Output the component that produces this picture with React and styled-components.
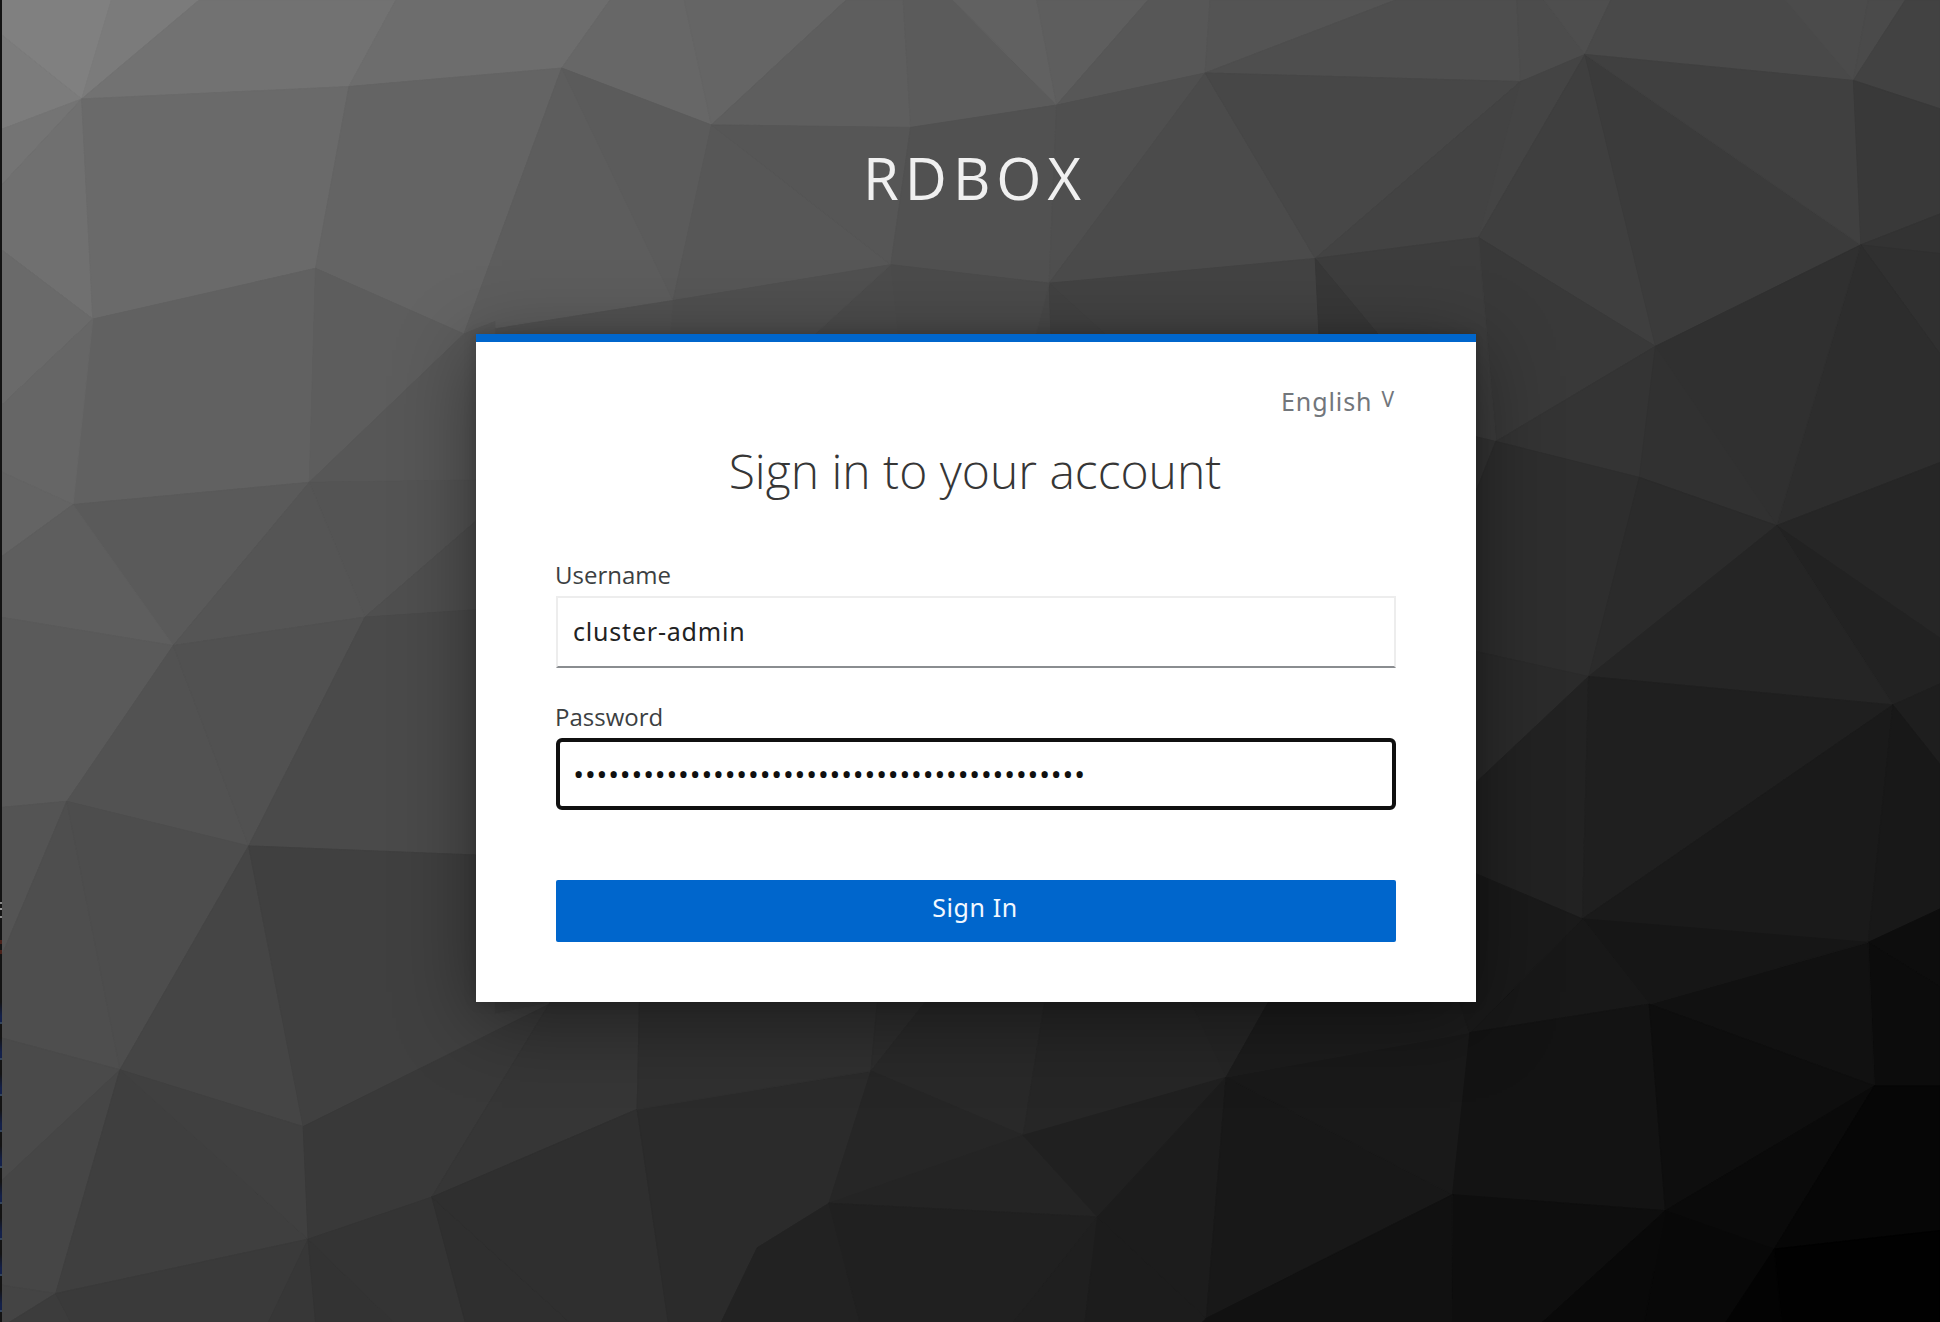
import React from "react";
import styled, { createGlobalStyle } from "styled-components";

const Reset = createGlobalStyle`
  *, *::before, *::after { box-sizing: border-box; }
  html, body { margin: 0; padding: 0; background: #1b1b1b; }
  body { font-family: "Open Sans", "Noto Sans", sans-serif; overflow: hidden; }
`;

/* Low-poly backdrop: named mesh vertices in a 1568 x 1069 space. */
const V = {
  A: [66, 80], B: [282, 70], C: [454, 55], D: [575, 101], E: [736, 103],
  F: [255, 217], G: [375, 270], H: [75, 258], I: [720, 214], J: [544, 243],
  K: [59, 408], L: [250, 390], M: [140, 522], N: [295, 499],
  Q: [854, 85], R: [974, 59], S: [1229, 66], T: [1281, 44], U: [1498, 65],
  W: [1063, 209], O: [848, 229], X: [1195, 192], Y: [1504, 198], Z: [1338, 280],
  AA: [1209, 357], AB: [1325, 386], AC: [1436, 425], AD: [1530, 570],
  AE: [1284, 547], AF: [1279, 743], AG: [1510, 762], AH: [1333, 812],
  AI: [1188, 835], AJ: [991, 871], AK: [1515, 878], AL: [827, 918],
  AM: [887, 984], AN: [1174, 966], AO: [1346, 979], AP: [1434, 1010],
  AQ: [975, 1066], AR: [670, 973], AS: [54, 648], AT: [201, 684],
  AU: [97, 865], AV: [245, 911], AW: [515, 897], AX: [704, 866],
  AY: [349, 968], AZ: [249, 1002], BA: [45, 1046], BB: [612, 1009],
};

/* Each facet: a gray level followed by its corners. */
const FACETS = `
80 0,0 90,0 A 0,27
7b 90,0 161,0 A
7c 0,27 A 0,105
72 161,0 320,0 B A
6d 320,0 493,0 C B
67 493,0 553,0 D C
65 553,0 684,0 D
5e 684,0 730,0 E D
5b 730,0 770,0 Q E
61 770,0 838,0 Q
5e 838,0 928,0 Q
57 928,0 978,0 R Q
54 978,0 1128,0 R
4e 1128,0 1226,0 S R
4c 1226,0 1248,0 T S
4e 1248,0 1302,0 T
49 1302,0 1443,0 U T
4b 1443,0 1510,0 U
4a 1510,0 1540,0 U
42 1540,0 1568,0 1568,88 U
74 0,105 A 0,151
70 0,151 A H 0,201
6a 0,201 H 0,329
6a A B F H
64 B C G F
5d C J G
5b C D J
57 D I J
56 D E I
51 E Q O I
4f Q R O
4b R W O
47 R S W
43 S X W
44 S T X
3f T Z X
3b T Y Z
40 T U Y
39 U 1568,88 1568,173 Y
33 Y 1568,173 1568,205
30 Y 1568,205 1568,286
2d Y 1568,286 1568,374 AC
30 Y Z AC
39 X Z AA
3d W X AA 1180,350
34 Z AB AA
31 Z AC AB
43 O W 1067,290 910,290
38 W 1067,290 1180,350
48 O 832,290 850,290
42 O 850,290 915,290
4b I O 832,290 728,290
4c I 728,290 637,290
50 J I 637,290 540,290
52 G J 540,290 400,290
61 H F L K
5d F G L
66 0,329 H K 0,381
64 0,381 K 0,451
5a K L M
5e 0,451 K M 0,499
57 G L 400,388 400,260
54 L 400,388 400,408 N
55 L N M
4f N 400,408 400,492
5a 0,499 M AS 0,653
52 M AS AT
51 M N AT
4a N 400,492 400,692 AT
54 0,653 AS 0,776
4e AS AU 0,839 0,776
4d AS AT AU
45 AT AV AU
40 AT 400,692 400,820 458,808 AV
4a AU 0,839 0,956
46 AU 0,956 0,1039 BA
3f AU BA AZ
40 AU AV AZ
39 AV 458,805 445,810 AY AZ
36 AY 445,810 517,800 AW
44 BA 0,1039 0,1069 8,1069
3c BA 8,1069 57,1069
3a BA AZ 217,1069 57,1069
37 AZ 217,1069 255,1069
33 AZ 255,1069 318,1069
34 AZ AY 376,1069 318,1069
2f AY 376,1069 460,1069
2f AY AW 540,1069 460,1069
2b AW AX AR BB 583,1069 540,1069
30 AW 517,800 710,800 AX
2d AX 710,800 756,800
29 AX 756,800 846,800 AL
26 AX AL AR
26 AL 846,800 958,800 AJ
24 AL AR AM
20 AL AJ AM
22 AR BB 583,1069 695,1069
20 AR AM 819,1069 695,1069
1f AM 819,1069 877,1069
1c AM 877,1069 972,1069 AQ
1c AM AJ AQ
18 AJ AN AQ
19 AJ AI AN
25 AJ 958,800 1031,800
1c AJ 1031,800 1176,800 AI
34 AA 1180,350 1180,430
2e AA AB AE 1180,524 1180,430
2b AB AC AE
26 AC 1568,374 1568,516
22 AC 1568,516 1568,553 AD
25 AC AD AE
2b AE 1180,524 1180,645
22 AE 1180,645 1180,701 AF
1f AE AD AF
1a AD AG AF
1e AD 1568,553 1568,618
18 AD 1568,618 1568,735 AG
0d AG 1568,735 1568,798
0c AG 1568,798 1568,878 AK
11 AG AK AH
16 AF AG AH
18 AF AH AI
1a AF AI 1176,800 1180,701
13 AH AI AN AO
0e AH AK AO
0a AK AO AP
06 AK 1568,878 1568,995 AP
0e AN AO 1247,1069 1173,1069
11 AN 1173,1069 972,1069 AQ
08 AO AP 1395,1069 1329,1069
09 AO 1247,1069 1329,1069
01 AP 1568,995 1568,1069 1440,1069
03 AP 1395,1069 1440,1069
`.trim().split("\n").map((line) => {
  const [level, ...corners] = line.split(" ");
  const points = corners.map((c) => (V[c] ? V[c].join(",") : c)).join(" ");
  return { fill: `#${level}${level}${level}`, points };
});

const Page = styled.div`
  display: grid;
  grid-template: 1322px / 1940px;
  overflow: hidden;
`;

const Mesh = styled.svg`
  grid-area: 1 / 1;
  width: 1940px;
  height: 1322px;
  background: #3c3c3c;
`;

const Screen = styled.div`
  grid-area: 1 / 1;
  z-index: 1;
  display: grid;
  grid-template-columns: 2px 1fr;
`;

const WindowEdge = styled.div`
  display: grid;
  grid-template-rows: 902px 1fr;
  background: #131313;
`;

const EdgeMarks = styled.div`
  grid-row: 2;
  background:
    linear-gradient(#888 0 2px, transparent 2px 6px, #999 6px 8px, transparent 8px 14px, #888 14px 16px,
      transparent 16px 38px, #4a211a 38px 42px, transparent 42px 48px, #4a211a 48px 52px, transparent 52px) no-repeat,
    repeating-linear-gradient(transparent 0 12px, #13204a 26px 32px, #34455c 32px 34px, #131313 34px 36px) 0 88px / 2px 332px no-repeat;
`;

const Main = styled.main`
  display: flex;
  flex-direction: column;
  align-items: center;
`;

const Brand = styled.header`
  height: 334px;
  padding: 138px 0 0 8px;
  font-size: 58px;
  line-height: 79px;
  letter-spacing: 6px;
  color: #f0f0f0;
  text-transform: uppercase;
`;

const Card = styled.section`
  display: flex;
  flex-direction: column;
  width: 1000px;
  height: 668px;
  margin-left: 10px;
  padding: 0 80px;
  border-top: 8px solid #0066cc;
  background: #fff;
  box-shadow: 0 16px 74px rgba(3, 3, 3, 0.42), 0 0 12px rgba(3, 3, 3, 0.16);
`;

const LocaleRow = styled.div`
  display: flex;
  justify-content: flex-end;
  align-items: baseline;
  gap: 9px;
  height: 100px;
  padding: 42px 2px 0 0;
  font-family: "Noto Sans", sans-serif;
  font-size: 25px;
  line-height: 34px;
  color: #72767b;
`;

const LocaleName = styled.span`
  letter-spacing: 0.9px;
`;

const LocaleCaret = styled.span`
  font-size: 21px;
  transform: translateY(-4px);
`;

const Title = styled.h1`
  margin: 0 2px 0 0;
  height: 116px;
  font-size: 48px;
  font-weight: 300;
  line-height: 58px;
  text-align: center;
  color: #363636;
`;

const Form = styled.form`
  display: flex;
  flex-direction: column;
`;

const Field = styled.div`
  display: flex;
  flex-direction: column;
  height: 142px;
`;

const Label = styled.label`
  height: 38px;
  margin-left: -1px;
  font-size: 24px;
  line-height: 34px;
  color: #3c3f42;
`;

const TextInput = styled.input`
  width: 840px;
  height: 72px;
  padding: 0 15px 3px;
  border: 2px solid #ededed;
  border-bottom-color: #8a8d90;
  border-radius: 0;
  outline: none;
  background: #fff;
  font-family: "Noto Sans", sans-serif;
  font-size: 25px;
  letter-spacing: 0.8px;
  color: #222;
`;

const PasswordInput = styled(TextInput)`
  padding: 0 13px 2px;
  border: 4px solid #101010;
  border-radius: 6px;
  font-family: "Open Sans", sans-serif;
  font-size: 30px;
  letter-spacing: 0.37px;
  color: #101010;
`;

const SubmitButton = styled.button`
  width: 840px;
  height: 62px;
  margin-top: 38px;
  padding: 0 2px 8px 0;
  border: 0;
  border-radius: 2px;
  background: #0066cc;
  font-family: "Noto Sans", sans-serif;
  font-size: 25px;
  letter-spacing: 0.6px;
  color: #f2f8ff;
`;

function Backdrop() {
  return (
    <Mesh viewBox="0 0 1568 1069" preserveAspectRatio="none" aria-hidden="true">
      {FACETS.map((f, i) => (
        <polygon key={i} points={f.points} fill={f.fill} stroke={f.fill} strokeWidth="0.8" />
      ))}
    </Mesh>
  );
}

export default function App() {
  return (
    <>
      <Reset />
      <Page>
        <Backdrop />
        <Screen>
          <WindowEdge>
            <EdgeMarks />
          </WindowEdge>
          <Main>
            <Brand>RDBOX</Brand>
            <Card>
              <LocaleRow>
                <LocaleName>English</LocaleName>
                <LocaleCaret>V</LocaleCaret>
              </LocaleRow>
              <Title>Sign in to your account</Title>
              <Form onSubmit={(e) => e.preventDefault()}>
                <Field>
                  <Label htmlFor="username">Username</Label>
                  <TextInput id="username" type="text" defaultValue="cluster-admin" />
                </Field>
                <Field>
                  <Label htmlFor="password">Password</Label>
                  <PasswordInput id="password" type="password" defaultValue={"x".repeat(44)} />
                </Field>
                <SubmitButton type="submit">Sign In</SubmitButton>
              </Form>
            </Card>
          </Main>
        </Screen>
      </Page>
    </>
  );
}
